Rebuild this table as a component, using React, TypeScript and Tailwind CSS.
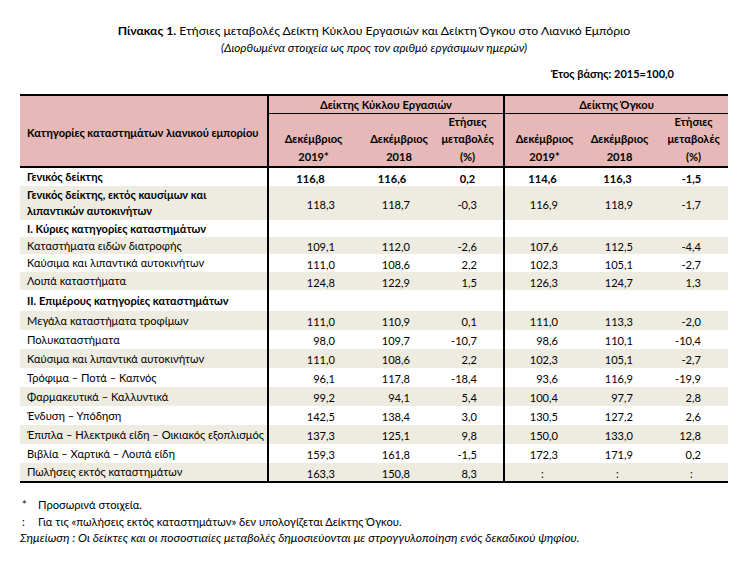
import React from "react";

type Row = {
  label: string[];
  bold?: boolean;
  vals?: string[];
  beige?: boolean;
  h: number;
  center?: boolean;
  boldVals?: boolean;
};

const rows: Row[] = [
  { label: ["Γενικός δείκτης"], bold: true, boldVals: true, vals: ["116,8", "116,6", "0,2", "114,6", "116,3", "-1,5"], h: 18, center: true },
  { label: ["Γενικός δείκτης, εκτός καυσίμων και", "λιπαντικών αυτοκινήτων"], bold: true, vals: ["118,3", "118,7", "-0,3", "116,9", "118,9", "-1,7"], beige: true, h: 34 },
  { label: ["I. Κύριες κατηγορίες καταστημάτων"], bold: true, h: 17 },
  { label: ["Καταστήματα ειδών διατροφής"], vals: ["109,1", "112,0", "-2,6", "107,6", "112,5", "-4,4"], beige: true, h: 17 },
  { label: ["Καύσιμα και λιπαντικά αυτοκινήτων"], vals: ["111,0", "108,6", "2,2", "102,3", "105,1", "-2,7"], h: 18 },
  { label: ["Λοιπά καταστήματα"], vals: ["124,8", "122,9", "1,5", "126,3", "124,7", "1,3"], beige: true, h: 18 },
  { label: ["II. Επιμέρους κατηγορίες καταστημάτων"], bold: true, h: 21 },
  { label: ["Μεγάλα καταστήματα τροφίμων"], vals: ["111,0", "110,9", "0,1", "111,0", "113,3", "-2,0"], beige: true, h: 19 },
  { label: ["Πολυκαταστήματα"], vals: ["98,0", "109,7", "-10,7", "98,6", "110,1", "-10,4"], h: 19 },
  { label: ["Καύσιμα και λιπαντικά αυτοκινήτων"], vals: ["111,0", "108,6", "2,2", "102,3", "105,1", "-2,7"], beige: true, h: 19 },
  { label: ["Τρόφιμα – Ποτά – Καπνός"], vals: ["96,1", "117,8", "-18,4", "93,6", "116,9", "-19,9"], h: 19 },
  { label: ["Φαρμακευτικά – Καλλυντικά"], vals: ["99,2", "94,1", "5,4", "100,4", "97,7", "2,8"], beige: true, h: 19 },
  { label: ["Ένδυση – Υπόδηση"], vals: ["142,5", "138,4", "3,0", "130,5", "127,2", "2,6"], h: 19 },
  { label: ["Έπιπλα – Ηλεκτρικά είδη – Οικιακός εξοπλισμός"], vals: ["137,3", "125,1", "9,8", "150,0", "133,0", "12,8"], beige: true, h: 19 },
  { label: ["Βιβλία – Χαρτικά – Λοιπά είδη"], vals: ["159,3", "161,8", "-1,5", "172,3", "171,9", "0,2"], h: 19 },
  { label: ["Πωλήσεις εκτός καταστημάτων"], vals: ["163,3", "150,8", "8,3", ":", ":", ":"], beige: true, h: 18 },
];

const grid = "grid grid-cols-[247px_85px_80px_71px_77px_75px_73px]";
const valPad = ["pr-[17px]", "pr-[22px]", "pr-[26px]", "pr-[22px]", "pr-[22px]", "pr-[27px]"];
const divider = ["border-l-2 border-black", "", "", "border-l-2 border-black", "", ""];

function ValCell({ v, i, center, bold }: { v?: string; i: number; center?: boolean; bold?: boolean }) {
  const isColon = v === ":";
  const align = center || isColon ? "justify-center" : "justify-end " + valPad[i];
  return (
    <div className={`flex items-center pt-[3px] ${align} ${divider[i]} ${bold ? "font-bold" : "font-normal"}`}>
      {v}
    </div>
  );
}

export default function App() {
  return (
    <div
      className="w-[741px] h-[565px] bg-white text-black overflow-hidden"
      style={{ fontFamily: "Lato, 'Open Sans', 'Noto Sans', sans-serif" }}
    >
      <div className="pl-[20px] w-[728px]">
        <div className="pt-[22px] text-center text-[12.2px] leading-[17px]">
          <span className="font-bold">Πίνακας 1.</span> Ετήσιες μεταβολές Δείκτη Κύκλου Εργασιών και Δείκτη Όγκου στο Λιανικό Εμπόριο
        </div>
        <div className="mt-[1px] text-center text-[11.8px] leading-[16px] italic">
          (Διορθωμένα στοιχεία ως προς τον αριθμό εργάσιμων ημερών)
        </div>
        <div className="mt-[11px] text-right pr-[54px] text-[11px] leading-[14px] font-bold">
          Έτος βάσης: 2015=100,0
        </div>

        <div className="mt-[13px] w-[708px] text-[11.1px] leading-[14px]">
          {/* header */}
          <div className="border-t-2 border-b-2 border-black bg-[#E6B8B7] flex">
            <div className="w-[247px] flex items-center pl-[7px] font-bold pt-[3px] whitespace-nowrap">
              Κατηγορίες καταστημάτων λιανικού εμπορίου
            </div>
            <div className="flex-1 flex flex-col">
              <div className="flex h-[18px] border-b border-black font-bold">
                <div className="w-[236px] border-l-2 border-black flex items-center justify-center">
                  Δείκτης Κύκλου Εργασιών
                </div>
                <div className="w-[225px] border-l-2 border-black flex items-center justify-center">
                  Δείκτης Όγκου
                </div>
              </div>
              <div className="flex h-[52px] font-bold">
                <div className="w-[85px] border-l-2 border-black flex flex-col justify-end items-center pl-[6px]">
                  <div className="leading-[18px]">Δεκέμβριος</div>
                  <div className="leading-[18px]">2019*</div>
                </div>
                <div className="w-[80px] flex flex-col justify-end items-center pl-[14px]">
                  <div className="leading-[18px]">Δεκέμβριος</div>
                  <div className="leading-[18px]">2018</div>
                </div>
                <div className="w-[71px] flex flex-col justify-end items-center">
                  <div className="leading-[16px]">Ετήσιες</div>
                  <div className="leading-[18px]">μεταβολές</div>
                  <div className="leading-[18px]">(%)</div>
                </div>
                <div className="w-[77px] border-l-2 border-black flex flex-col justify-end items-center pl-[4px]">
                  <div className="leading-[18px]">Δεκέμβριος</div>
                  <div className="leading-[18px]">2019*</div>
                </div>
                <div className="w-[75px] flex flex-col justify-end items-center pl-[4px]">
                  <div className="leading-[18px]">Δεκέμβριος</div>
                  <div className="leading-[18px]">2018</div>
                </div>
                <div className="w-[73px] flex flex-col justify-end items-center pl-[4px]">
                  <div className="leading-[16px]">Ετήσιες</div>
                  <div className="leading-[18px]">μεταβολές</div>
                  <div className="leading-[18px]">(%)</div>
                </div>
              </div>
            </div>
          </div>

          {/* body */}
          <div className="border-b-2 border-black">
            {rows.map((r, idx) => (
              <div
                key={idx}
                className={`${grid} ${r.beige ? "bg-[#EEECE1]" : "bg-white"}`}
                style={{ height: r.h }}
              >
                <div className={`flex flex-col justify-center pl-[7px] leading-[16px] whitespace-nowrap ${r.bold ? "font-bold" : ""}`}>
                  {r.label.map((l, j) => (
                    <div key={j}>{l}</div>
                  ))}
                </div>
                {[0, 1, 2, 3, 4, 5].map((i) => (
                  <ValCell key={i} v={r.vals ? r.vals[i] : undefined} i={i} center={r.center} bold={r.boldVals} />
                ))}
              </div>
            ))}
          </div>
        </div>

        <div className="mt-[14px] text-[11.2px] leading-[16.5px]">
          <div className="flex">
            <span className="w-[18px] pl-[2px]">*</span>
            <span>Προσωρινά στοιχεία.</span>
          </div>
          <div className="flex">
            <span className="w-[18px] pl-[2px]">:</span>
            <span>Για τις «πωλήσεις εκτός καταστημάτων» δεν υπολογίζεται Δείκτης Όγκου.</span>
          </div>
          <div className="italic text-[12px]">
            Σημείωση : Οι δείκτες και οι ποσοστιαίες μεταβολές δημοσιεύονται με στρογγυλοποίηση ενός δεκαδικού ψηφίου.
          </div>
        </div>
      </div>
    </div>
  );
}
